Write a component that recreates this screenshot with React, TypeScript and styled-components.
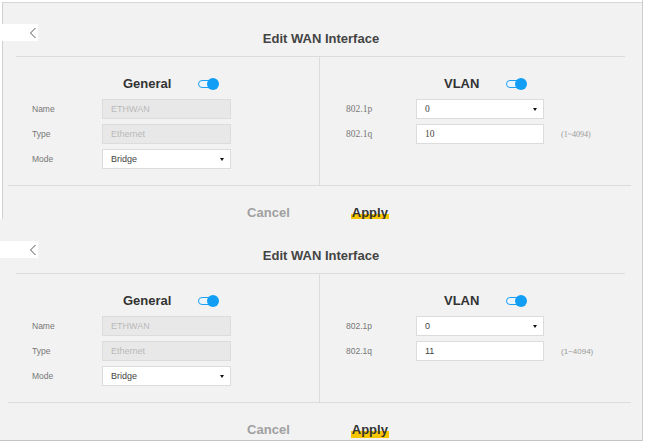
import React from 'react';
import styled, { createGlobalStyle, css } from 'styled-components';

const Global = createGlobalStyle`
  html, body { margin: 0; padding: 0; background: #fff; }
  body { font-family: "Liberation Sans", Arial, sans-serif; }
  * { box-sizing: border-box; }
`;

const Page = styled.div`
  width: 651px;
  height: 442px;
  overflow: hidden;
  background: #fff;
  display: flex;
  flex-direction: column;
`;

const Frame = styled.div<{ $top?: boolean }>`
  flex: none;
  width: 643px;
  border-right: 1px solid #cdcdcd;
  overflow: hidden;
  ${p =>
    p.$top
      ? css`
          height: 219px;
          padding-top: 2px;
        `
      : css`
          height: 222px;
          border-bottom: 1px solid #c4c4c4;
        `}
`;

const Screen = styled.div<{ $top?: boolean }>`
  background: #f2f2f2;
  height: 260px;
  ${p =>
    p.$top &&
    css`
      box-shadow: inset 2px 0 0 #fff, inset 3px 0 0 #d0d0d0, inset 0 1px 0 #d6d6d6;
    `}
`;

const Header = styled.div`
  height: 54px;
  display: grid;
  grid-template-columns: 1fr auto 1fr;
  align-items: start;
`;

const Back = styled.button`
  justify-self: start;
  width: 38px;
  height: 17px;
  margin-top: 22px;
  padding: 0 0 0 29px;
  border: 0;
  background: #fff;
  display: flex;
  align-items: center;
  cursor: pointer;
`;

const Title = styled.h1`
  margin: 29px 0 0;
  font-size: 13px;
  line-height: 16px;
  font-weight: 700;
  color: #444;
`;

const Body = styled.div`
  margin: 0 17px 0 16px;
  border-top: 1px solid #dcdcdc;
  display: grid;
  grid-template-columns: 304px 1fr;
`;

const Column = styled.section<{ $divider?: boolean }>`
  padding: 17px 0 16px;
  display: flex;
  flex-direction: column;
  gap: 5px;
  ${p => p.$divider && css`border-right: 1px solid #dcdcdc;`}
`;

const SectionHead = styled.div<{ $indent: number }>`
  height: 20px;
  margin-bottom: 0;
  padding-left: ${p => p.$indent}px;
  display: flex;
  align-items: center;
  gap: 27px;
`;

const SectionTitle = styled.h2`
  margin: 0;
  font-size: 13px;
  line-height: 16px;
  font-weight: 700;
  color: #333;
`;

const Toggle = styled.span`
  position: relative;
  width: 20px;
  height: 8px;
  border: 1px solid #1e9ff2;
  border-radius: 5px;
  background: #eaf5fd;
  &::after {
    content: '';
    position: absolute;
    right: -2px;
    top: 50%;
    width: 12px;
    height: 12px;
    margin-top: -6px;
    border-radius: 50%;
    background: #129ef5;
  }
`;

const Row = styled.div<{ $indent: number }>`
  height: 20px;
  padding-left: ${p => p.$indent}px;
  display: grid;
  grid-template-columns: 70px ${p => (p.$indent > 20 ? 128 : 129)}px auto;
  align-items: center;
`;

const Label = styled.span<{ $serif?: boolean }>`
  font-size: ${p => (p.$serif ? 9.5 : 8.5)}px;
  color: #777;
  font-family: ${p => (p.$serif ? '"Liberation Serif", serif' : '"Liberation Sans", Arial, sans-serif')};
`;

const Field = styled.div<{ $disabled?: boolean; $serif?: boolean }>`
  height: 20px;
  padding: 0 6px 0 8px;
  border: 1px solid #dcdcdc;
  background: ${p => (p.$disabled ? '#e8e8e8' : '#fff')};
  color: ${p => (p.$disabled ? '#b9b9b9' : '#444')};
  font-size: ${p => (p.$serif ? 9.5 : 9)}px;
  font-family: ${p => (p.$serif ? '"Liberation Serif", serif' : '"Liberation Sans", Arial, sans-serif')};
  display: flex;
  align-items: center;
  justify-content: space-between;
`;

const Caret = styled.span`
  width: 0;
  height: 0;
  margin-top: 1px;
  border-left: 2.5px solid transparent;
  border-right: 2.5px solid transparent;
  border-top: 3px solid #111;
`;

const Hint = styled.span<{ $serif?: boolean }>`
  margin-left: 17px;
  font-size: 8px;
  color: #999;
  font-family: ${p => (p.$serif ? '"Liberation Serif", serif' : '"Liberation Sans", Arial, sans-serif')};
`;

const Footer = styled.div`
  margin: 0 11px 0 8px;
  border-top: 1px solid #dcdcdc;
  padding: 19px 4px 0 0;
  display: flex;
  justify-content: center;
  gap: 60px;
`;

const ActionButton = styled.button<{ $primary?: boolean }>`
  border: 0;
  padding: 0 1px;
  font-family: "Liberation Sans", Arial, sans-serif;
  font-size: 13px;
  line-height: 16px;
  font-weight: 700;
  cursor: pointer;
  color: ${p => (p.$primary ? '#333' : '#a0a0a0')};
  background: ${p =>
    p.$primary ? 'linear-gradient(to bottom, transparent 9px, #f7c600 9px)' : 'transparent'};
`;

const Chevron = () => (
  <svg width="8" height="12" viewBox="0 0 8 12">
    <polyline points="6.5,1 1.5,6 6.5,11" fill="none" stroke="#555" strokeWidth="1" />
  </svg>
);

type PanelProps = { top?: boolean; vlanId: string; serif?: boolean };

const Panel = ({ top, vlanId, serif }: PanelProps) => (
  <Frame $top={top}>
    <Screen $top={top}>
      <Header>
        <Back aria-label="Back">
          <Chevron />
        </Back>
        <Title>Edit WAN Interface</Title>
        <span />
      </Header>
      <Body>
        <Column $divider>
          <SectionHead $indent={107}>
            <SectionTitle>General</SectionTitle>
            <Toggle />
          </SectionHead>
          <Row $indent={16}>
            <Label>Name</Label>
            <Field $disabled>ETHWAN</Field>
          </Row>
          <Row $indent={16}>
            <Label>Type</Label>
            <Field $disabled>Ethernet</Field>
          </Row>
          <Row $indent={16}>
            <Label>Mode</Label>
            <Field>
              Bridge
              <Caret />
            </Field>
          </Row>
        </Column>
        <Column>
          <SectionHead $indent={124}>
            <SectionTitle>VLAN</SectionTitle>
            <Toggle />
          </SectionHead>
          <Row $indent={26}>
            <Label $serif={serif}>802.1p</Label>
            <Field $serif={serif}>
              0
              <Caret />
            </Field>
          </Row>
          <Row $indent={26}>
            <Label $serif={serif}>802.1q</Label>
            <Field $serif={serif}>{vlanId}</Field>
            <Hint $serif={serif}>(1~4094)</Hint>
          </Row>
        </Column>
      </Body>
      <Footer>
        <ActionButton>Cancel</ActionButton>
        <ActionButton $primary>Apply</ActionButton>
      </Footer>
    </Screen>
  </Frame>
);

export default function App() {
  return (
    <>
      <Global />
      <Page>
        <Panel top vlanId="10" serif />
        <Panel vlanId="11" />
      </Page>
    </>
  );
}
